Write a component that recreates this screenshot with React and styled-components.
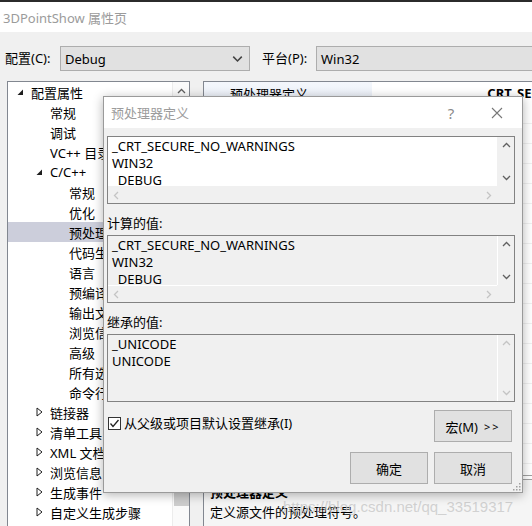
import React from "react";
import styled, { createGlobalStyle } from "styled-components";

const GlobalStyle = createGlobalStyle`
  html, body { margin: 0; padding: 0; width: 532px; height: 526px; overflow: hidden; background: #f0f0f0; }
  body { font-family: "Noto Sans", "Noto Sans CJK SC", sans-serif; font-size: 13px; color: #000; }
  * { box-sizing: border-box; }
`;

const Window = styled.div`
  position: relative;
  width: 532px;
  height: 526px;
  display: flex;
  flex-direction: column;
  overflow: hidden;
`;

const TopStrip = styled.div`
  height: 2px;
  background: #2b2b2b;
`;

const TitleBar = styled.div`
  height: 30px;
  background: #fff;
  display: flex;
  align-items: center;
  padding-left: 3px;
  color: #9b9b9b;
  font-size: 13px;
`;

const ConfigRow = styled.div`
  height: 49px;
  display: flex;
  align-items: flex-start;
  padding: 14px 0 0 5px;
`;

const FieldLabel = styled.div`
  width: ${(p) => p.$w}px;
  margin-left: ${(p) => p.$ml || 0}px;
  height: 25px;
  line-height: 25px;
  white-space: nowrap;
  flex-shrink: 0;
`;

const Combo = styled.div`
  height: 25px;
  ${(p) => (p.$w ? `width: ${p.$w}px; flex-shrink: 0;` : "flex: 1; margin-right: -20px;")}
  background: #e1e1e1;
  border: 1px solid #adadad;
  display: flex;
  align-items: center;
  justify-content: space-between;
  padding: 0 6px 0 4px;
`;

const Main = styled.div`
  flex: 1;
  display: flex;
  gap: 13px;
  padding-left: 7px;
  min-height: 0;
`;

const Tree = styled.div`
  width: 183px;
  flex-shrink: 0;
  border: 1px solid #828790;
  border-bottom: none;
  background: #fff;
  display: flex;
`;

const TreeList = styled.div`
  flex: 1;
  overflow: hidden;
`;

const TreeRow = styled.div`
  height: 20px;
  display: flex;
  align-items: center;
  padding-left: ${(p) => 9 + p.$level * 19}px;
  background: ${(p) => (p.$selected ? "#cccedb" : "transparent")};
  white-space: nowrap;
`;

const Expander = styled.span`
  width: 14px;
  height: 20px;
  display: flex;
  align-items: center;
  flex-shrink: 0;
`;

const VScroll = styled.div`
  width: 17px;
  background: #fafafa;
  border-left: 1px solid #ececec;
  display: flex;
  flex-direction: column;
  align-items: center;
`;

const ScrollArrowBox = styled.div`
  width: 100%;
  height: ${(p) => p.$h || 19}px;
  display: flex;
  align-items: center;
  justify-content: center;
  flex-shrink: 0;
`;

const Thumb = styled.div`
  width: 15px;
  height: 25px;
  margin-top: ${(p) => p.$offset}px;
  background: #cdcdcd;
`;

const PropPanel = styled.div`
  flex: 1;
  min-width: 0;
  overflow: hidden;
  border-left: 1px solid #828790;
  border-top: 1px solid #828790;
  background: #fff;
  display: flex;
  flex-direction: column;
`;

const PropHeader = styled.div`
  height: 22px;
  display: flex;
  align-items: center;
  white-space: nowrap;
`;

const PropNameCell = styled.div`
  width: 168px;
  flex-shrink: 0;
  height: 100%;
  padding-left: 26px;
  display: flex;
  align-items: center;
  background: linear-gradient(#f4f7fc, #e9eef7);
`;

const PropValueCell = styled.div`
  padding-left: 110px;
  font-weight: bold;
`;

const PropRows = styled.div`
  flex: 1;
  border-bottom: 1px solid #a0a0a0;
  margin-bottom: 3px;
`;

const PropRow = styled.div`
  height: 20px;
  border-bottom: 1px solid #f0f0f0;
`;

const Description = styled.div`
  height: 47px;
  border-top: 1px solid #a0a0a0;
  background: #f5f5f5;
  padding: 2px 0 0 6px;
  line-height: 20px;
`;

const DescTitle = styled.div`
  font-weight: bold;
`;

const Watermark = styled.div`
  position: absolute;
  left: 283px;
  top: 498px;
  font-family: "Liberation Sans", Arial, sans-serif;
  font-size: 15px;
  color: rgba(200, 200, 200, 0.8);
  white-space: nowrap;
  pointer-events: none;
`;

/* dialog */
const Dialog = styled.div`
  position: absolute;
  left: 103px;
  top: 96px;
  width: 420px;
  height: 397px;
  border: 1px solid #9a9a9a;
  box-shadow: 0 2px 10px rgba(0, 0, 0, 0.3);
  background: #f0f0f0;
  display: flex;
  flex-direction: column;
`;

const DialogTitle = styled.div`
  height: 31px;
  background: #fff;
  display: flex;
  align-items: center;
  padding-left: 7px;
  color: #9c9c9c;
`;

const TitleText = styled.span`
  flex: 1;
`;

const HelpGlyph = styled.span`
  width: 16px;
  margin-right: 30px;
  color: #8a8a8a;
  font-size: 15px;
  text-align: center;
`;

const CloseBox = styled.span`
  width: 16px;
  margin-right: 17px;
  display: flex;
  justify-content: center;
`;

const DialogBody = styled.div`
  flex: 1;
  padding: 8px 7px 0 3px;
  display: flex;
  flex-direction: column;
`;

const SectionLabel = styled.div`
  line-height: 18px;
  margin: 10px 0 3px;
`;

const ListBox = styled.div`
  height: 68px;
  border: 1px solid #828282;
  display: grid;
  grid-template-columns: 1fr 17px;
  grid-template-rows: ${(p) => (p.$hscroll ? "1fr 17px" : "1fr")};
  background: #f0f0f0;
  flex-shrink: 0;
`;

const ListText = styled.div`
  background: ${(p) => (p.$disabled ? "#f0f0f0" : "#fff")};
  padding: 1px 0 0 4px;
  line-height: 17px;
  overflow: hidden;
  white-space: nowrap;
`;

const ListVScroll = styled.div`
  display: flex;
  flex-direction: column;
  justify-content: space-between;
  border-left: 1px solid ${(p) => (p.$disabled ? "#fff" : "#f0f0f0")};
`;

const ListHScroll = styled.div`
  display: flex;
  justify-content: space-between;
  align-items: center;
  padding: 0 4px;
  border-top: 1px solid ${(p) => (p.$disabled ? "#fff" : "#f0f0f0")};
`;

const Corner = styled.div`
  background: #f0f0f0;
`;

const CheckRow = styled.div`
  margin-top: 8px;
  height: 32px;
  display: flex;
  align-items: flex-start;
  justify-content: space-between;
  padding-right: 3px;
`;

const CheckLabel = styled.label`
  display: flex;
  align-items: center;
  gap: 3px;
  margin: 4px 0 0 1px;
  line-height: 18px;
`;

const CheckBox = styled.span`
  width: 13px;
  height: 13px;
  border: 1px solid #333;
  background: #fff;
  display: flex;
  align-items: center;
  justify-content: center;
`;

const Button = styled.div`
  width: 78px;
  height: 32px;
  background: #e1e1e1;
  border: 1px solid #adadad;
  display: flex;
  align-items: center;
  justify-content: center;
  white-space: nowrap;
`;

const Arrows = styled.span`
  margin-left: 6px;
  font-size: 11px;
  letter-spacing: 2px;
`;

const ButtonRow = styled.div`
  margin-top: 10px;
  display: flex;
  justify-content: flex-end;
  gap: 6px;
  padding-right: 3px;
`;

const Grip = styled.svg`
  position: absolute;
  right: 1px;
  bottom: 1px;
`;

const Chevron = ({ dir = "down", color = "#606060", size = 9 }) => {
  const pts = {
    up: "1,6 4.5,2.5 8,6",
    down: "1,3 4.5,6.5 8,3",
    left: "6,1 2.5,4.5 6,8",
    right: "3,1 6.5,4.5 3,8",
  }[dir];
  return (
    <svg width={size} height={size} viewBox="0 0 9 9">
      <polyline points={pts} fill="none" stroke={color} strokeWidth="1.3" />
    </svg>
  );
};

const ExpandedTri = () => (
  <svg width="7" height="7" viewBox="0 0 7 7">
    <polygon points="6,0.5 6,6 0.5,6" fill="#1e1e1e" />
  </svg>
);

const CollapsedTri = () => (
  <svg width="7" height="10" viewBox="0 0 7 10">
    <polygon points="1,1 6,5 1,9" fill="none" stroke="#1e1e1e" strokeWidth="1" />
  </svg>
);

const treeItems = [
  { t: "配置属性", l: 0, e: "open" },
  { t: "常规", l: 1 },
  { t: "调试", l: 1 },
  { t: "VC++ 目录", l: 1 },
  { t: "C/C++", l: 1, e: "open" },
  { t: "常规", l: 2 },
  { t: "优化", l: 2 },
  { t: "预处理器", l: 2, sel: true },
  { t: "代码生成", l: 2 },
  { t: "语言", l: 2 },
  { t: "预编译头", l: 2 },
  { t: "输出文件", l: 2 },
  { t: "浏览信息", l: 2 },
  { t: "高级", l: 2 },
  { t: "所有选项", l: 2 },
  { t: "命令行", l: 2 },
  { t: "链接器", l: 1, e: "closed" },
  { t: "清单工具", l: 1, e: "closed" },
  { t: "XML 文档生成器", l: 1, e: "closed" },
  { t: "浏览信息", l: 1, e: "closed" },
  { t: "生成事件", l: 1, e: "closed" },
  { t: "自定义生成步骤", l: 1, e: "closed" },
];

const Box = ({ lines, disabled, hscroll, vDisabled }) => (
  <ListBox $hscroll={hscroll}>
    <ListText $disabled={disabled}>
      {lines.map((l, i) => (
        <div key={i}>{l}</div>
      ))}
    </ListText>
    <ListVScroll $disabled={disabled}>
      <ScrollArrowBox $h={17}>
        <Chevron dir="up" color={vDisabled ? "#c4c4c4" : "#606060"} />
      </ScrollArrowBox>
      <ScrollArrowBox $h={17}>
        <Chevron dir="down" color={vDisabled ? "#c4c4c4" : "#606060"} />
      </ScrollArrowBox>
    </ListVScroll>
    {hscroll && (
      <>
        <ListHScroll $disabled={disabled}>
          <Chevron dir="left" color="#c4c4c4" />
          <Chevron dir="right" color="#c4c4c4" />
        </ListHScroll>
        <Corner />
      </>
    )}
  </ListBox>
);

export default function App() {
  return (
    <>
      <GlobalStyle />
      <Window>
        <TopStrip />
        <TitleBar>3DPointShow 属性页</TitleBar>
        <ConfigRow>
          <FieldLabel $w={55}>配置(C):</FieldLabel>
          <Combo $w={190}>
            Debug
            <Chevron dir="down" color="#444" size={11} />
          </Combo>
          <FieldLabel $w={54} $ml={12}>平台(P):</FieldLabel>
          <Combo>Win32</Combo>
        </ConfigRow>
        <Main>
          <Tree>
            <TreeList>
              {treeItems.map((it, i) => (
                <TreeRow key={i} $level={it.l} $selected={it.sel}>
                  <Expander>
                    {it.e === "open" && <ExpandedTri />}
                    {it.e === "closed" && <CollapsedTri />}
                  </Expander>
                  {it.t}
                </TreeRow>
              ))}
            </TreeList>
            <VScroll>
              <ScrollArrowBox>
                <Chevron dir="up" color="#606060" />
              </ScrollArrowBox>
              <Thumb $offset={380} />
            </VScroll>
          </Tree>
          <PropPanel>
            <PropHeader>
              <PropNameCell>预处理器定义</PropNameCell>
              <PropValueCell>_CRT_SECURE_NO_WARNINGS</PropValueCell>
            </PropHeader>
            <PropRows>
              {Array.from({ length: 18 }).map((_, i) => (
                <PropRow key={i} />
              ))}
            </PropRows>
            <Description>
              <DescTitle>预处理器定义</DescTitle>
              <div>定义源文件的预处理符号。</div>
            </Description>
          </PropPanel>
        </Main>
        <Watermark>https://blog.csdn.net/qq_33519317</Watermark>

        <Dialog>
          <DialogTitle>
            <TitleText>预处理器定义</TitleText>
            <HelpGlyph>?</HelpGlyph>
            <CloseBox>
              <svg width="12" height="12" viewBox="0 0 12 12">
                <path d="M1 1 L11 11 M11 1 L1 11" stroke="#777" strokeWidth="1.1" />
              </svg>
            </CloseBox>
          </DialogTitle>
          <DialogBody>
            <Box
              lines={["_CRT_SECURE_NO_WARNINGS", "WIN32", "_DEBUG"]}
              hscroll
            />
            <SectionLabel>计算的值:</SectionLabel>
            <Box
              lines={["_CRT_SECURE_NO_WARNINGS", "WIN32", "_DEBUG"]}
              hscroll
              disabled
            />
            <SectionLabel>继承的值:</SectionLabel>
            <Box lines={["_UNICODE", "UNICODE"]} disabled vDisabled />
            <CheckRow>
              <CheckLabel>
                <CheckBox>
                  <svg width="11" height="11" viewBox="0 0 11 11">
                    <polyline points="1.5,5.5 4,8.5 9.5,2" fill="none" stroke="#222" strokeWidth="1.3" />
                  </svg>
                </CheckBox>
                从父级或项目默认设置继承(I)
              </CheckLabel>
              <Button>
                宏(M)<Arrows>&gt;&gt;</Arrows>
              </Button>
            </CheckRow>
            <ButtonRow>
              <Button>确定</Button>
              <Button>取消</Button>
            </ButtonRow>
          </DialogBody>
          <Grip width="9" height="9" viewBox="0 0 9 9">
            {[[7, 1], [7, 4], [4, 4], [7, 7], [4, 7], [1, 7]].map(([x, y], i) => (
              <rect key={i} x={x} y={y} width="1.5" height="1.5" fill="#a0a0a0" />
            ))}
          </Grip>
        </Dialog>
      </Window>
    </>
  );
}
